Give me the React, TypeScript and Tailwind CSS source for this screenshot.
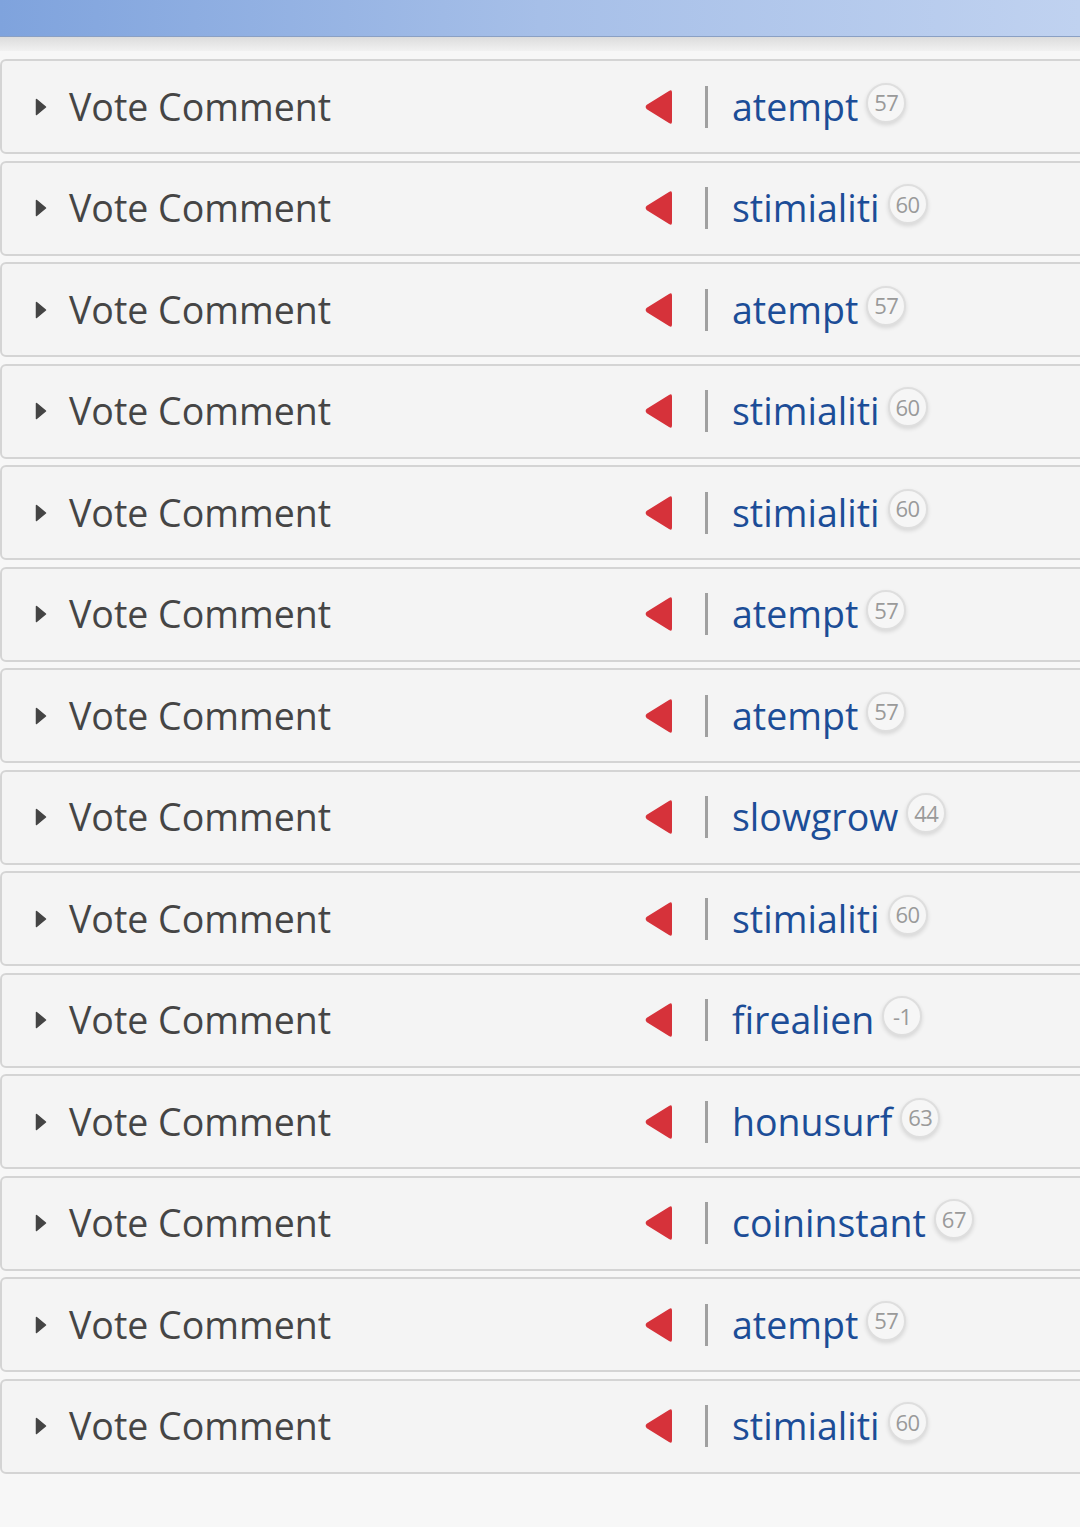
import React from 'react'

type Vote = {
  author: string
  rep: number
}

const votes: Vote[] = [
  { author: 'atempt', rep: 57 },
  { author: 'stimialiti', rep: 60 },
  { author: 'atempt', rep: 57 },
  { author: 'stimialiti', rep: 60 },
  { author: 'stimialiti', rep: 60 },
  { author: 'atempt', rep: 57 },
  { author: 'atempt', rep: 57 },
  { author: 'slowgrow', rep: 44 },
  { author: 'stimialiti', rep: 60 },
  { author: 'firealien', rep: -1 },
  { author: 'honusurf', rep: 63 },
  { author: 'coininstant', rep: 67 },
  { author: 'atempt', rep: 57 },
  { author: 'stimialiti', rep: 60 },
]

function Caret() {
  return (
    <svg width="12" height="18" viewBox="0 0 12 18" className="shrink-0">
      <path d="M1.5 1.5 L10.5 9 L1.5 16.5 Z" fill="#444" stroke="#444" strokeWidth="1.5" strokeLinejoin="round" />
    </svg>
  )
}

function DownVote() {
  return (
    <svg width="28" height="36" viewBox="0 0 28 36" className="shrink-0">
      <path
        d="M27 3.5 L27 32.5 Q27 36 24 34 L1.8 20.2 Q-0.5 18 1.8 15.8 L24 2 Q27 0 27 3.5 Z"
        fill="#d6323a"
      />
    </svg>
  )
}

function VoteRow({ vote }: { vote: Vote }) {
  return (
    <div className="flex items-center h-[95px] -mr-3 bg-[#f4f4f4] border-2 border-[#d4d4d4] rounded-l-[6px]">
      <div className="flex items-center w-[643px] pl-[33px]">
        <Caret />
        <span className="ml-[22px] text-[37.5px] text-[#454545] leading-none">Vote Comment</span>
      </div>
      <DownVote />
      <span className="ml-[32px] w-[3px] h-[42px] bg-[#a0a0a0]" />
      <span className="ml-[24px] text-[37.5px] text-[#1c4d97] leading-none">{vote.author}</span>
      <span className="ml-[8px] -mt-[8px] flex items-center justify-center w-[40px] h-[40px] rounded-full border-2 border-[#dedede] bg-[#f6f6f6] shadow-[0_2px_4px_rgba(0,0,0,0.12)] text-[22px] text-[#9a9a9a] tracking-tight">
        {vote.rep}
      </span>
    </div>
  )
}

export default function App() {
  return (
    <div className="min-h-[1527px] bg-[#f7f7f7]" style={{ fontFamily: '"Open Sans", sans-serif' }}>
      <div className="h-[37px] bg-gradient-to-r from-[#7fa3dd] via-[#a6bfe8] to-[#c0d2f0] border-b border-[#8aa0c4]" />
      <div className="h-[14px] bg-gradient-to-b from-[#dcdcdc] to-[#f1f1f1]" />
      <div className="pt-[8px] overflow-hidden flex flex-col gap-[6.5px]">
        {votes.map((v, i) => (
          <VoteRow key={i} vote={v} />
        ))}
      </div>
    </div>
  )
}
